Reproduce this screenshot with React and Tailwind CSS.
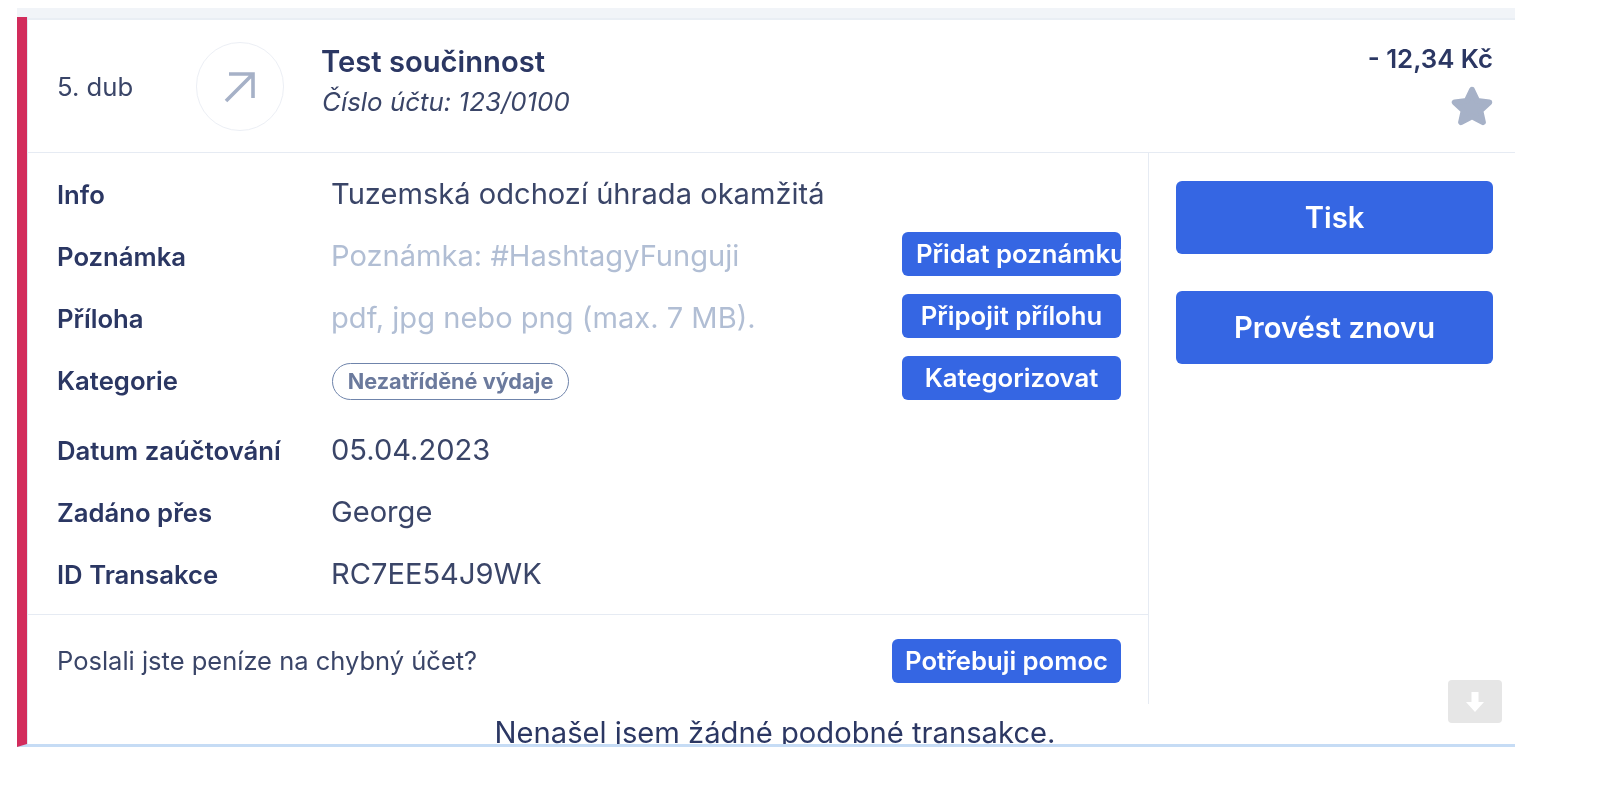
const LABEL = 'mb-[2px] w-[274px] shrink-0 text-[25.7px] font-semibold text-[#2b3763]';
const VALUE = 'mb-[4px] block text-[29.1px] text-[#3a4568]';
const PLACEHOLDER = 'mb-[4px] block text-[29.1px] text-[#b1bed4]';
const SMALL_BTN = 'mb-[8px] h-11 w-[219px] shrink-0 overflow-hidden whitespace-nowrap rounded-md bg-[#3566e3] text-[25.7px] font-semibold text-white';
const BIG_BTN = 'h-[73px] w-full rounded-md bg-[#3566e3] text-[29.2px] font-semibold text-white';

function Row({ label, className = '', children, action }) {
  return (
    <div className={`flex h-[62px] items-center ${className}`}>
      <div className={LABEL}>{label}</div>
      <div className="min-w-0 flex-1">{children}</div>
      {action}
    </div>
  );
}

function ArrowIcon() {
  return (
    <svg viewBox="0 0 32 32" className="h-8 w-8" fill="none" stroke="#a6b1c7" strokeWidth="3.6">
      <path d="M2 30 L29 3 M5 3 H29 V27" />
    </svg>
  );
}

function StarIcon() {
  return (
    <svg viewBox="0 0 40 38" className="h-[40px] w-[42px]" fill="#a6b1c7" stroke="#a6b1c7" strokeWidth="5.5" strokeLinejoin="round">
      <path d="M20 3.5 L25 14 L36.5 15.5 L28 23.5 L30.5 34.5 L20 29 L9.5 34.5 L12 23.5 L3.5 15.5 L15 14 Z" />
    </svg>
  );
}

export default function App() {
  return (
    <div className="h-[787px] overflow-hidden bg-white pl-[17px] pt-2 font-['Inter',sans-serif] blur-[0.4px]">
      <div className="w-[1498px]">
        <div className="h-3 border-b-2 border-[#e9eef4] bg-[#f1f4f8]" />
        <div className="relative -mt-[3px] h-[730px] overflow-hidden border-b-[3px] border-l-[10px] border-b-[#c6dcf5] border-l-[#d22c5c] pt-[3px] shadow-[inset_1px_0_0_#e4e7f1]">
          <div className="flex h-[133px] items-center border-b border-[#e6ebf3] pl-[30px] pr-[22px]">
            <div className="mt-[3px] w-[139px] text-[25.7px] text-[#3a4568]">5. dub</div>
            <div className="mt-px flex h-[89px] w-[88px] items-center justify-center rounded-full border border-[#eceff5]">
              <ArrowIcon />
            </div>
            <div className="mb-[9px] ml-[38px] flex-1">
              <div className="-ml-px text-[29.2px] leading-[38px] font-semibold text-[#2b3763]">Test součinnost</div>
              <div className="mt-[2px] text-[25.9px] leading-[38px] italic text-[#3a4568]">Číslo účtu: 123/0100</div>
            </div>
            <div className="mb-[5px] flex flex-col items-end">
              <div className="text-[25.8px] leading-[34px] font-semibold text-[#2b3763]">- 12,34 Kč</div>
              <div className="mt-[10px]"><StarIcon /></div>
            </div>
          </div>

          <div className="flex h-[551px]">
            <div className="w-[1122px] shrink-0 border-r border-[#e6ebf3]">
              <div className="h-[462px] border-b border-[#e6ebf3] pl-[30px] pr-[27px] pt-3">
                <Row label="Info"><span className={VALUE}>Tuzemská odchozí úhrada okamžitá</span></Row>
                <Row label="Poznámka" action={<button className={`${SMALL_BTN} px-[14px] text-left`}>Přidat poznámku</button>}>
                  <span className={PLACEHOLDER}>Poznámka: #HashtagyFunguji</span>
                </Row>
                <Row label="Příloha" action={<button className={SMALL_BTN}>Připojit přílohu</button>}>
                  <span className={PLACEHOLDER}>pdf, jpg nebo png (max. 7 MB).</span>
                </Row>
                <Row label="Kategorie" action={<button className={SMALL_BTN}>Kategorizovat</button>}>
                  <span className="mb-[2px] ml-px flex h-[37px] w-[237px] items-center justify-center rounded-full border-[1.5px] border-[#6f84ab] text-[21.7px] font-bold text-[#6b7a9d]">Nezatříděné výdaje</span>
                </Row>
                <Row label="Datum zaúčtování" className="mt-2"><span className={VALUE}>05.04.2023</span></Row>
                <Row label="Zadáno přes"><span className={VALUE}>George</span></Row>
                <Row label="ID Transakce"><span className={VALUE}>RC7EE54J9WK</span></Row>
              </div>
              <div className="flex h-[89px] items-start justify-between pl-[30px] pr-[27px] pt-6">
                <span className="text-[25.5px] leading-[44px] text-[#3a4568]">Poslali jste peníze na chybný účet?</span>
                <button className="h-11 w-[229px] rounded-md bg-[#3566e3] text-[25.7px] font-semibold text-white">Potřebuji pomoc</button>
              </div>
            </div>
            <div className="flex flex-1 flex-col gap-[37px] pl-[27px] pr-[22px] pt-[28px]">
              <button className={BIG_BTN}>Tisk</button>
              <button className={BIG_BTN}>Provést znovu</button>
            </div>
          </div>

          <div className="mt-[9px] pl-2 text-center text-[29.2px] leading-[40px] text-[#2b3763]">Nenašel jsem žádné podobné transakce.</div>

          <div className="absolute left-[1421px] top-[663px] flex h-[43px] w-[54px] items-center justify-center rounded bg-[#e6e6e6]">
            <svg viewBox="0 0 18 20" className="h-5 w-[18px]" fill="white">
              <path d="M5.5 0 H12.5 V10 H18 L9 20 L0 10 H5.5 Z" />
            </svg>
          </div>
        </div>
      </div>
    </div>
  );
}
